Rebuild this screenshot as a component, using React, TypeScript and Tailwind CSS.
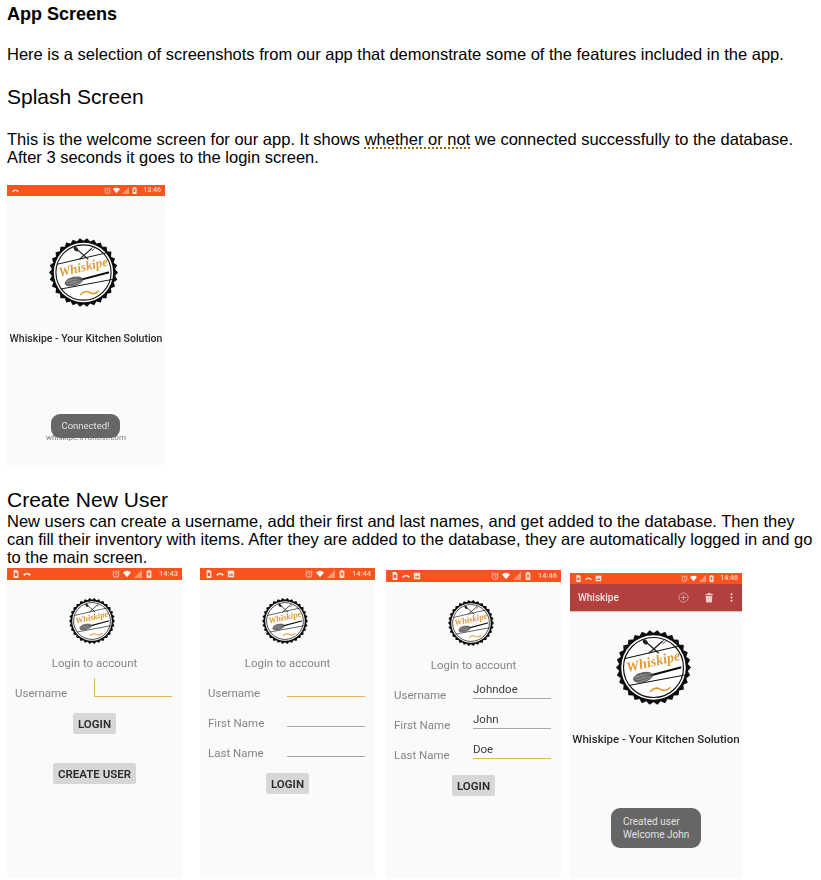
const ORANGE_BAR = "bg-[#f95420]";

function Logo({ size }: { size: number }) {
  // serrated outer edge of the badge
  const teeth = 30;
  const points: string[] = [];
  for (let i = 0; i < teeth * 2; i++) {
    const r = i % 2 === 0 ? 50 : 46;
    const a = (i * Math.PI) / teeth;
    points.push(`${(50 + r * Math.cos(a)).toFixed(2)},${(50 + r * Math.sin(a)).toFixed(2)}`);
  }
  return (
    <svg viewBox="0 0 100 100" width={size} height={size} className="block shrink-0">
      <polygon points={points.join(" ")} fill="#0c0c0c" />
      <circle cx="50" cy="50" r="43" fill="#fff" />
      <circle cx="50" cy="50" r="40" fill="none" stroke="#111" strokeWidth="1.6" />
      {/* spoon and fork */}
      <path d="M39 15 L57 31" stroke="#222" strokeWidth="1.8" />
      <path d="M62 15 L44 31" stroke="#222" strokeWidth="1.8" />
      <ellipse cx="39" cy="16" rx="2.6" ry="4" transform="rotate(-45 39 16)" fill="#222" />
      <path d="M60 17 L64 13 M62 19 L66 15" stroke="#222" strokeWidth="1.1" />
      {/* banner lines */}
      <path d="M12 38 L90 20" stroke="#111" strokeWidth="1.4" />
      <path d="M17 74 L92 60" stroke="#111" strokeWidth="1.4" />
      <text
        x="51"
        y="48"
        textAnchor="middle"
        transform="rotate(-13 51 48)"
        fontFamily="'Liberation Serif', serif"
        fontStyle="italic"
        fontWeight="700"
        fontSize="19"
        fill="#e09a36"
      >
        Whiskipe
      </text>
      {/* whisk */}
      <path d="M48 60 L86 50" stroke="#0c0c0c" strokeWidth="2.8" strokeLinecap="round" />
      <ellipse cx="36" cy="63" rx="13" ry="6" transform="rotate(-14 36 63)" fill="#8a8a8a" stroke="#333" strokeWidth="0.9" />
      <path d="M24 66 Q37 60 48 60 M25 68 Q39 67 48 60 M27 60 Q39 56 48 60" stroke="#333" strokeWidth="0.7" fill="none" />
      {/* tilde */}
      <path d="M46 82 Q52 75 59 79 T72 77" stroke="#e09a36" strokeWidth="2.2" fill="none" strokeLinecap="round" />
    </svg>
  );
}

function StatusBar({ time, left, h = "h-3", small }: { time: string; left: string[]; h?: string; small?: boolean }) {
  const size = small ? 7 : 8;
  return (
    <div className={`${h} ${ORANGE_BAR} flex items-center justify-between pl-[5px] pr-[4px] shrink-0`}>
      <div className="flex items-center gap-[3px]">
        {left.map((kind, i) => (
          <svg key={i} viewBox="0 0 10 10" width={size} height={size} fill="#fff" opacity="0.85">
            {kind === "phone" && <path d="M2 0h4l2 2v8H2z M3.5 3.5v4h3v-4z" fillRule="evenodd" />}
            {kind === "call" && <path d="M0 6Q5 1 10 6L8 7.5 7 6Q5 5 3 6L2 7.5z" />}
            {kind === "image" && <path d="M1 1h8v8H1z M2 7h6L6 4 4.5 6 3.5 5z" fillRule="evenodd" />}
          </svg>
        ))}
      </div>
      <div className={`flex items-center ${small ? "gap-[2px]" : "gap-[3px]"}`}>
        <svg viewBox="0 0 10 10" width={size} height={size} fill="none" stroke="#fff" strokeOpacity="0.75" strokeWidth="1.1">
          <circle cx="5" cy="5.5" r="3.6" />
          <path d="M5 3.5V5.5L6.4 6.4M0.8 2.2L2.4 0.8M9.2 2.2L7.6 0.8" />
        </svg>
        <svg viewBox="0 0 10 10" width={size} height={size} fill="#fff">
          <path d="M0 3Q5 -1 10 3L5 9z" />
        </svg>
        <svg viewBox="0 0 10 10" width={size} height={size} fill="#fff" opacity="0.4">
          <path d="M0 10L10 0V10z" />
        </svg>
        <svg viewBox="0 0 10 10" width={size} height={size} fill="#fff" opacity="0.8">
          <path d="M3.7 0h2.6v1H8v9H2V1h1.7z M4 3v4h2V3z" fillRule="evenodd" />
        </svg>
        <span
          className={`ml-[3px] font-['Roboto',sans-serif] leading-none font-medium text-white/75 ${
            small ? "text-[7px]" : "text-[7.5px]"
          }`}
        >
          {time}
        </span>
      </div>
    </div>
  );
}

function Field({ value, color, cursor }: { value?: string; color: string; cursor?: boolean }) {
  return (
    <div
      className={`w-[78px] h-[19px] flex items-end pb-[2px] border-b text-[11.5px] leading-[14px] text-[#3c3c3c] ${color} ${
        cursor ? "border-l-[1.5px] border-b-[1.5px]" : ""
      }`}
    >
      {value}
    </div>
  );
}

function Button({ label }: { label: string }) {
  return (
    <div className="mx-auto w-fit h-[21px] px-[5px] flex items-center bg-[#d6d7d7] rounded-[2px] text-[11.5px] font-semibold text-[#2b2b2b]">
      {label}
    </div>
  );
}

type FieldRow = { label: string; value?: string; active?: boolean; cursor?: boolean };

function LoginScreen({
  className,
  time,
  left,
  rows,
  createUser,
}: {
  className: string;
  time: string;
  left: string[];
  rows: FieldRow[];
  createUser?: boolean;
}) {
  return (
    <div className={`${className} w-[175px] bg-[#fafafa] flex flex-col font-['Roboto',sans-serif] blur-[0.3px]`}>
      <StatusBar time={time} left={left} />
      <div className="mt-[18px] -ml-[5px] flex justify-center">
        <Logo size={46} />
      </div>
      <div className="mt-[12px] text-center text-[11.5px] leading-[14px] text-[#858585]">Login to account</div>
      <div className="mt-[8px] flex flex-col">
        {rows.map((row) => (
          <div key={row.label} className="h-[30px] flex pl-[8px]">
            <div className="w-[79px] self-center text-[11.5px] text-[#858585]">{row.label}</div>
            <Field
              value={row.value}
              cursor={row.cursor}
              color={row.active ? "border-[#e6b45c]" : "border-[#a8a8a8]"}
            />
          </div>
        ))}
      </div>
      <div className="mt-[5px]">
        <Button label="LOGIN" />
      </div>
      {createUser && (
        <div className="mt-[29px]">
          <Button label="CREATE USER" />
        </div>
      )}
    </div>
  );
}

function SplashScreen() {
  return (
    <div className="relative w-[158px] h-[280px] mt-[19px] ml-[7px] bg-[#fafafa] flex flex-col items-center font-['Roboto',sans-serif] blur-[0.3px]">
      <StatusBar time="13:46" left={["call"]} h="h-[11px] self-stretch" small />
      <div className="mt-[42px] -ml-[6px]">
        <Logo size={69} />
      </div>
      <div className="mt-[25px] text-[10.5px] leading-[14px] font-medium text-[#2a2a2a] whitespace-nowrap">
        Whiskipe - Your Kitchen Solution
      </div>
      <div className="mt-auto mb-[21px] text-[8px] leading-[12px] text-[#808080]">whiskipe.x10host.com</div>
      <div className="absolute left-[44px] top-[229px] w-[69px] h-[24px] rounded-[9px] bg-[#666] flex items-center justify-center text-[9.5px] text-[#e0e0e0]">
        Connected!
      </div>
    </div>
  );
}

function MainScreen() {
  return (
    <div className="relative w-[172px] h-[305px] mt-[7px] bg-[#fafafa] flex flex-col items-center font-['Roboto',sans-serif] blur-[0.3px]">
      <StatusBar time="14:46" left={["phone", "call", "image"]} h="h-[11px] self-stretch" small />
      <div className="self-stretch h-[27px] bg-[#b33f3f] flex items-center pl-[8px] pr-[9px] shadow-[0_1px_1px_rgba(0,0,0,0.2)]">
        <span className="text-[10px] font-medium text-[#f5e4e4]">Whiskipe</span>
        <svg viewBox="0 0 12 12" width="11" height="11" fill="none" stroke="#e6bcbc" strokeWidth="0.8" className="ml-auto">
          <circle cx="6" cy="6" r="5" />
          <path d="M3.2 6h5.6" />
          <path d="M6 3.2v5.6" />
        </svg>
        <svg viewBox="0 0 12 12" width="10" height="11" fill="#eccaca" className="ml-[15px]">
          <path d="M4.5 0.5h3l.5 1h2.5v1.5h-9V2h2.5z M2 4h8l-.6 8H2.6z" />
        </svg>
        <svg viewBox="0 0 4 12" width="3" height="9" fill="#f0dada" className="ml-[16px]">
          <circle cx="2" cy="1.6" r="1.4" />
          <circle cx="2" cy="6" r="1.4" />
          <circle cx="2" cy="10.4" r="1.4" />
        </svg>
      </div>
      <div className="mt-[19px] -ml-[5px]">
        <Logo size={75} />
      </div>
      <div className="mt-[27px] text-[11.5px] leading-[14px] font-medium text-[#2a2a2a] whitespace-nowrap">
        Whiskipe - Your Kitchen Solution
      </div>
      <div className="absolute left-[41px] top-[235px] w-[90px] h-[40px] rounded-[9px] bg-[#666] pl-[12px] flex flex-col justify-center text-[10px] leading-[13px] text-[#e0e0e0]">
        <span>Created user</span>
        <span>Welcome John</span>
      </div>
    </div>
  );
}

export default function App() {
  return (
    <div className="w-[821px] h-[880px] overflow-hidden bg-white text-black font-['Liberation_Sans',Arial,sans-serif] text-[16.5px] leading-[18px]">
      <h1 className="pt-[5px] pl-[7px] text-[18px] leading-[18px] font-bold">App Screens</h1>
      <p className="mt-[22px] pl-[7px]">
        Here is a selection of screenshots from our app that demonstrate some of the features included in the app.
      </p>
      <h2 className="mt-[22px] pl-[7px] text-[21px] leading-[24px]">Splash Screen</h2>
      <p className="mt-[21px] pl-[7px]">
        This is the welcome screen for our app. It shows{" "}
        <span className="underline decoration-dotted decoration-[#9a6a1c] decoration-2 underline-offset-2">
          whether or not
        </span>{" "}
        we connected successfully to the database.
        <br />
        After 3 seconds it goes to the login screen.
      </p>
      <SplashScreen />
      <h2 className="mt-[23px] pl-[7px] text-[21px] leading-[24px]">Create New User</h2>
      <p className="pl-[7px]">
        New users can create a username, add their first and last names, and get added to the database. Then they
        <br />
        can fill their inventory with items. After they are added to the database, they are automatically logged in and
        go
        <br />
        to the main screen.
      </p>
      <div className="pl-[7px] flex items-start">
        <LoginScreen
          className="mt-[2px] h-[310px]"
          time="14:43"
          left={["phone", "call"]}
          rows={[{ label: "Username", active: true, cursor: true }]}
          createUser
        />
        <LoginScreen
          className="mt-[2px] ml-[18px] h-[309px]"
          time="14:44"
          left={["phone", "call", "image"]}
          rows={[{ label: "Username", active: true }, { label: "First Name" }, { label: "Last Name" }]}
        />
        <LoginScreen
          className="mt-[4px] ml-[11px] h-[308px]"
          time="14:46"
          left={["phone", "call", "image"]}
          rows={[
            { label: "Username", value: "Johndoe" },
            { label: "First Name", value: "John" },
            { label: "Last Name", value: "Doe", active: true },
          ]}
        />
        <div className="ml-[9px]">
          <MainScreen />
        </div>
      </div>
    </div>
  );
}
